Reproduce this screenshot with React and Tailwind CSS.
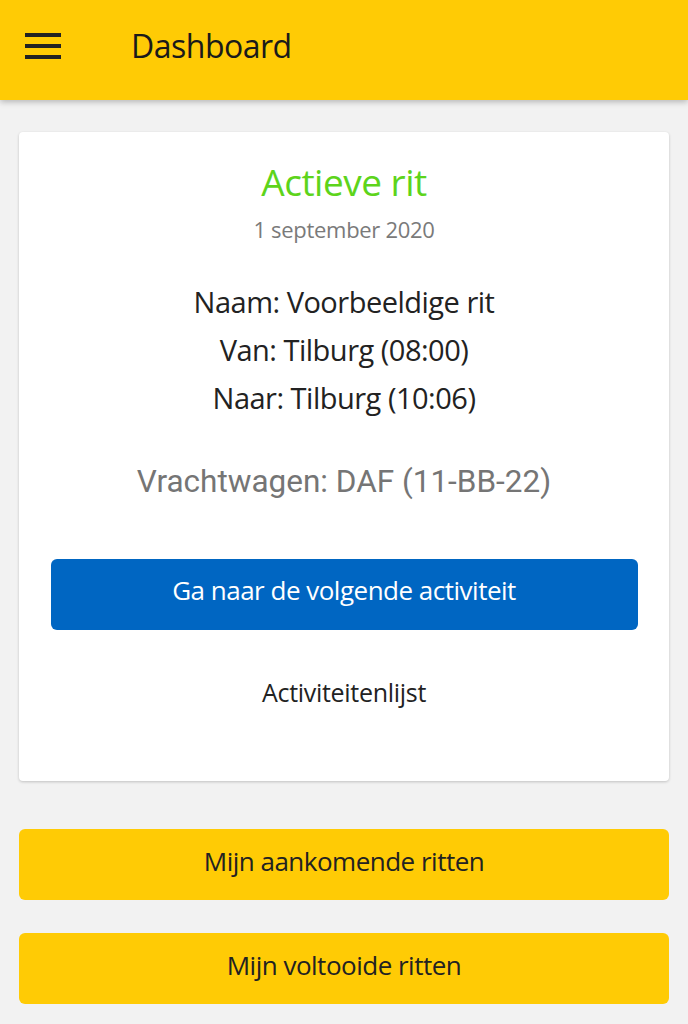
import React from "react";

const font = { fontFamily: '"Open Sans", "Noto Sans", sans-serif' };

export default function App() {
  return (
    <div className="min-h-screen bg-[#f2f2f2]" style={font}>
      <header className="h-[100px] bg-[#ffcb05] flex items-center pb-[8px] shadow-[0_2px_6px_rgba(0,0,0,0.25)]">
        <button className="ml-[25px] w-[36px] flex flex-col gap-[7px]">
          <span className="block h-[4px] bg-[#222]" />
          <span className="block h-[4px] bg-[#222]" />
          <span className="block h-[4px] bg-[#222]" />
        </button>
        <h1 className="ml-[70px] text-[32px] leading-[40px] text-[#1a1a1a] tracking-[-0.5px]">Dashboard</h1>
      </header>

      <main className="px-[19px] pt-[32px]">
        <section className="bg-white rounded-[4px] shadow-[0_1px_3px_rgba(0,0,0,0.2)] flex flex-col items-center pt-[26px] pb-[73px]">
          <h2 className="text-[37px] leading-[48px] text-[#5dd41b] tracking-[-0.5px]">Actieve rit</h2>
          <p className="mt-[9px] text-[22px] leading-[28px] text-[#7a7a7a] tracking-[-0.3px]">1 september 2020</p>

          <div className="mt-[35px] flex flex-col items-center text-[29px] leading-[48px] text-[#222] tracking-[-0.5px]">
            <p>Naam: Voorbeeldige rit</p>
            <p>Van: Tilburg (08:00)</p>
            <p>Naar: Tilburg (10:06)</p>
          </div>

          <p className="mt-[40px] text-[31.5px] leading-[40px] text-[#757575] font-[Roboto]">Vrachtwagen: DAF (11-BB-22)</p>

          <button className="mt-[57px] w-[587px] h-[71px] pb-[8px] rounded-[6px] bg-[#0066c2] text-white text-[26px] tracking-[-0.5px]">
            Ga naar de volgende activiteit
          </button>

          <p className="mt-[46px] text-[25px] leading-[32px] text-[#222] tracking-[-0.3px]">Activiteitenlijst</p>
        </section>

        <div className="mt-[48px] flex flex-col gap-[33px]">
          <button className="h-[71px] pb-[6px] rounded-[6px] bg-[#ffcb05] text-[26px] text-[#222] tracking-[-0.5px]">
            Mijn aankomende ritten
          </button>
          <button className="h-[71px] pb-[6px] rounded-[6px] bg-[#ffcb05] text-[26px] text-[#222] tracking-[-0.5px]">
            Mijn voltooide ritten
          </button>
        </div>
      </main>
    </div>
  );
}
